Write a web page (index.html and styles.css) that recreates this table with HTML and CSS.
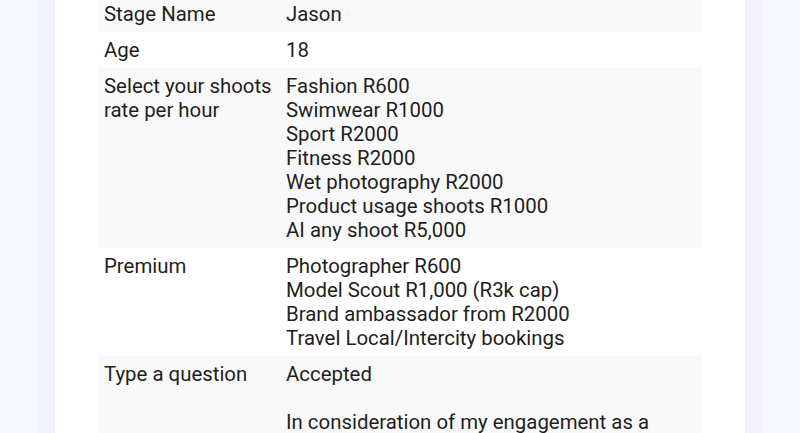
FILE: index.html
```html
<!DOCTYPE html>
<html>
<head>
<meta charset="utf-8">
<link rel="stylesheet" href="styles.css">
</head>
<body>
<div class="page">
  <div class="card">
    <table class="details">
      <tr class="shade">
        <td class="label">Stage Name</td>
        <td class="value">Jason</td>
      </tr>
      <tr>
        <td class="label">Age</td>
        <td class="value">18</td>
      </tr>
      <tr class="shade">
        <td class="label">Select your shoots rate per hour</td>
        <td class="value">Fashion R600<br>Swimwear R1000<br>Sport R2000<br>Fitness R2000<br>Wet photography R2000<br>Product usage shoots R1000<br>AI any shoot R5,000</td>
      </tr>
      <tr>
        <td class="label">Premium</td>
        <td class="value">Photographer R600<br>Model Scout R1,000 (R3k cap)<br>Brand ambassador from R2000<br>Travel Local/Intercity bookings</td>
      </tr>
      <tr class="shade">
        <td class="label">Type a question</td>
        <td class="value">Accepted<br><br>In consideration of my engagement as a</td>
      </tr>
    </table>
  </div>
</div>
</body>
</html>
```

FILE: styles.css
```css
html, body {
  margin: 0;
  padding: 0;
}
body {
  background: #f5f8fe;
  font-family: Roboto, "Noto Sans", sans-serif;
  color: #1e1e1e;
  overflow: hidden;
}
.page {
  width: 722px;
  margin: 0 auto;
  min-height: 433px;
  box-sizing: border-box;
  border-left: 16px solid #f3f1fd;
  border-right: 16px solid #f3f1fd;
  background: #ffffff;
}
.card {
  padding: 0 43px;
  min-height: 433px;
}
.details {
  width: 604px;
  border-collapse: collapse;
  margin-top: -4px;
  font-size: 20.4px;
  line-height: 24px;
}
.details td {
  padding: 6px;
  vertical-align: top;
}
.details .label {
  width: 170px;
}
.shade {
  background: #f9f9f9;
}
```
